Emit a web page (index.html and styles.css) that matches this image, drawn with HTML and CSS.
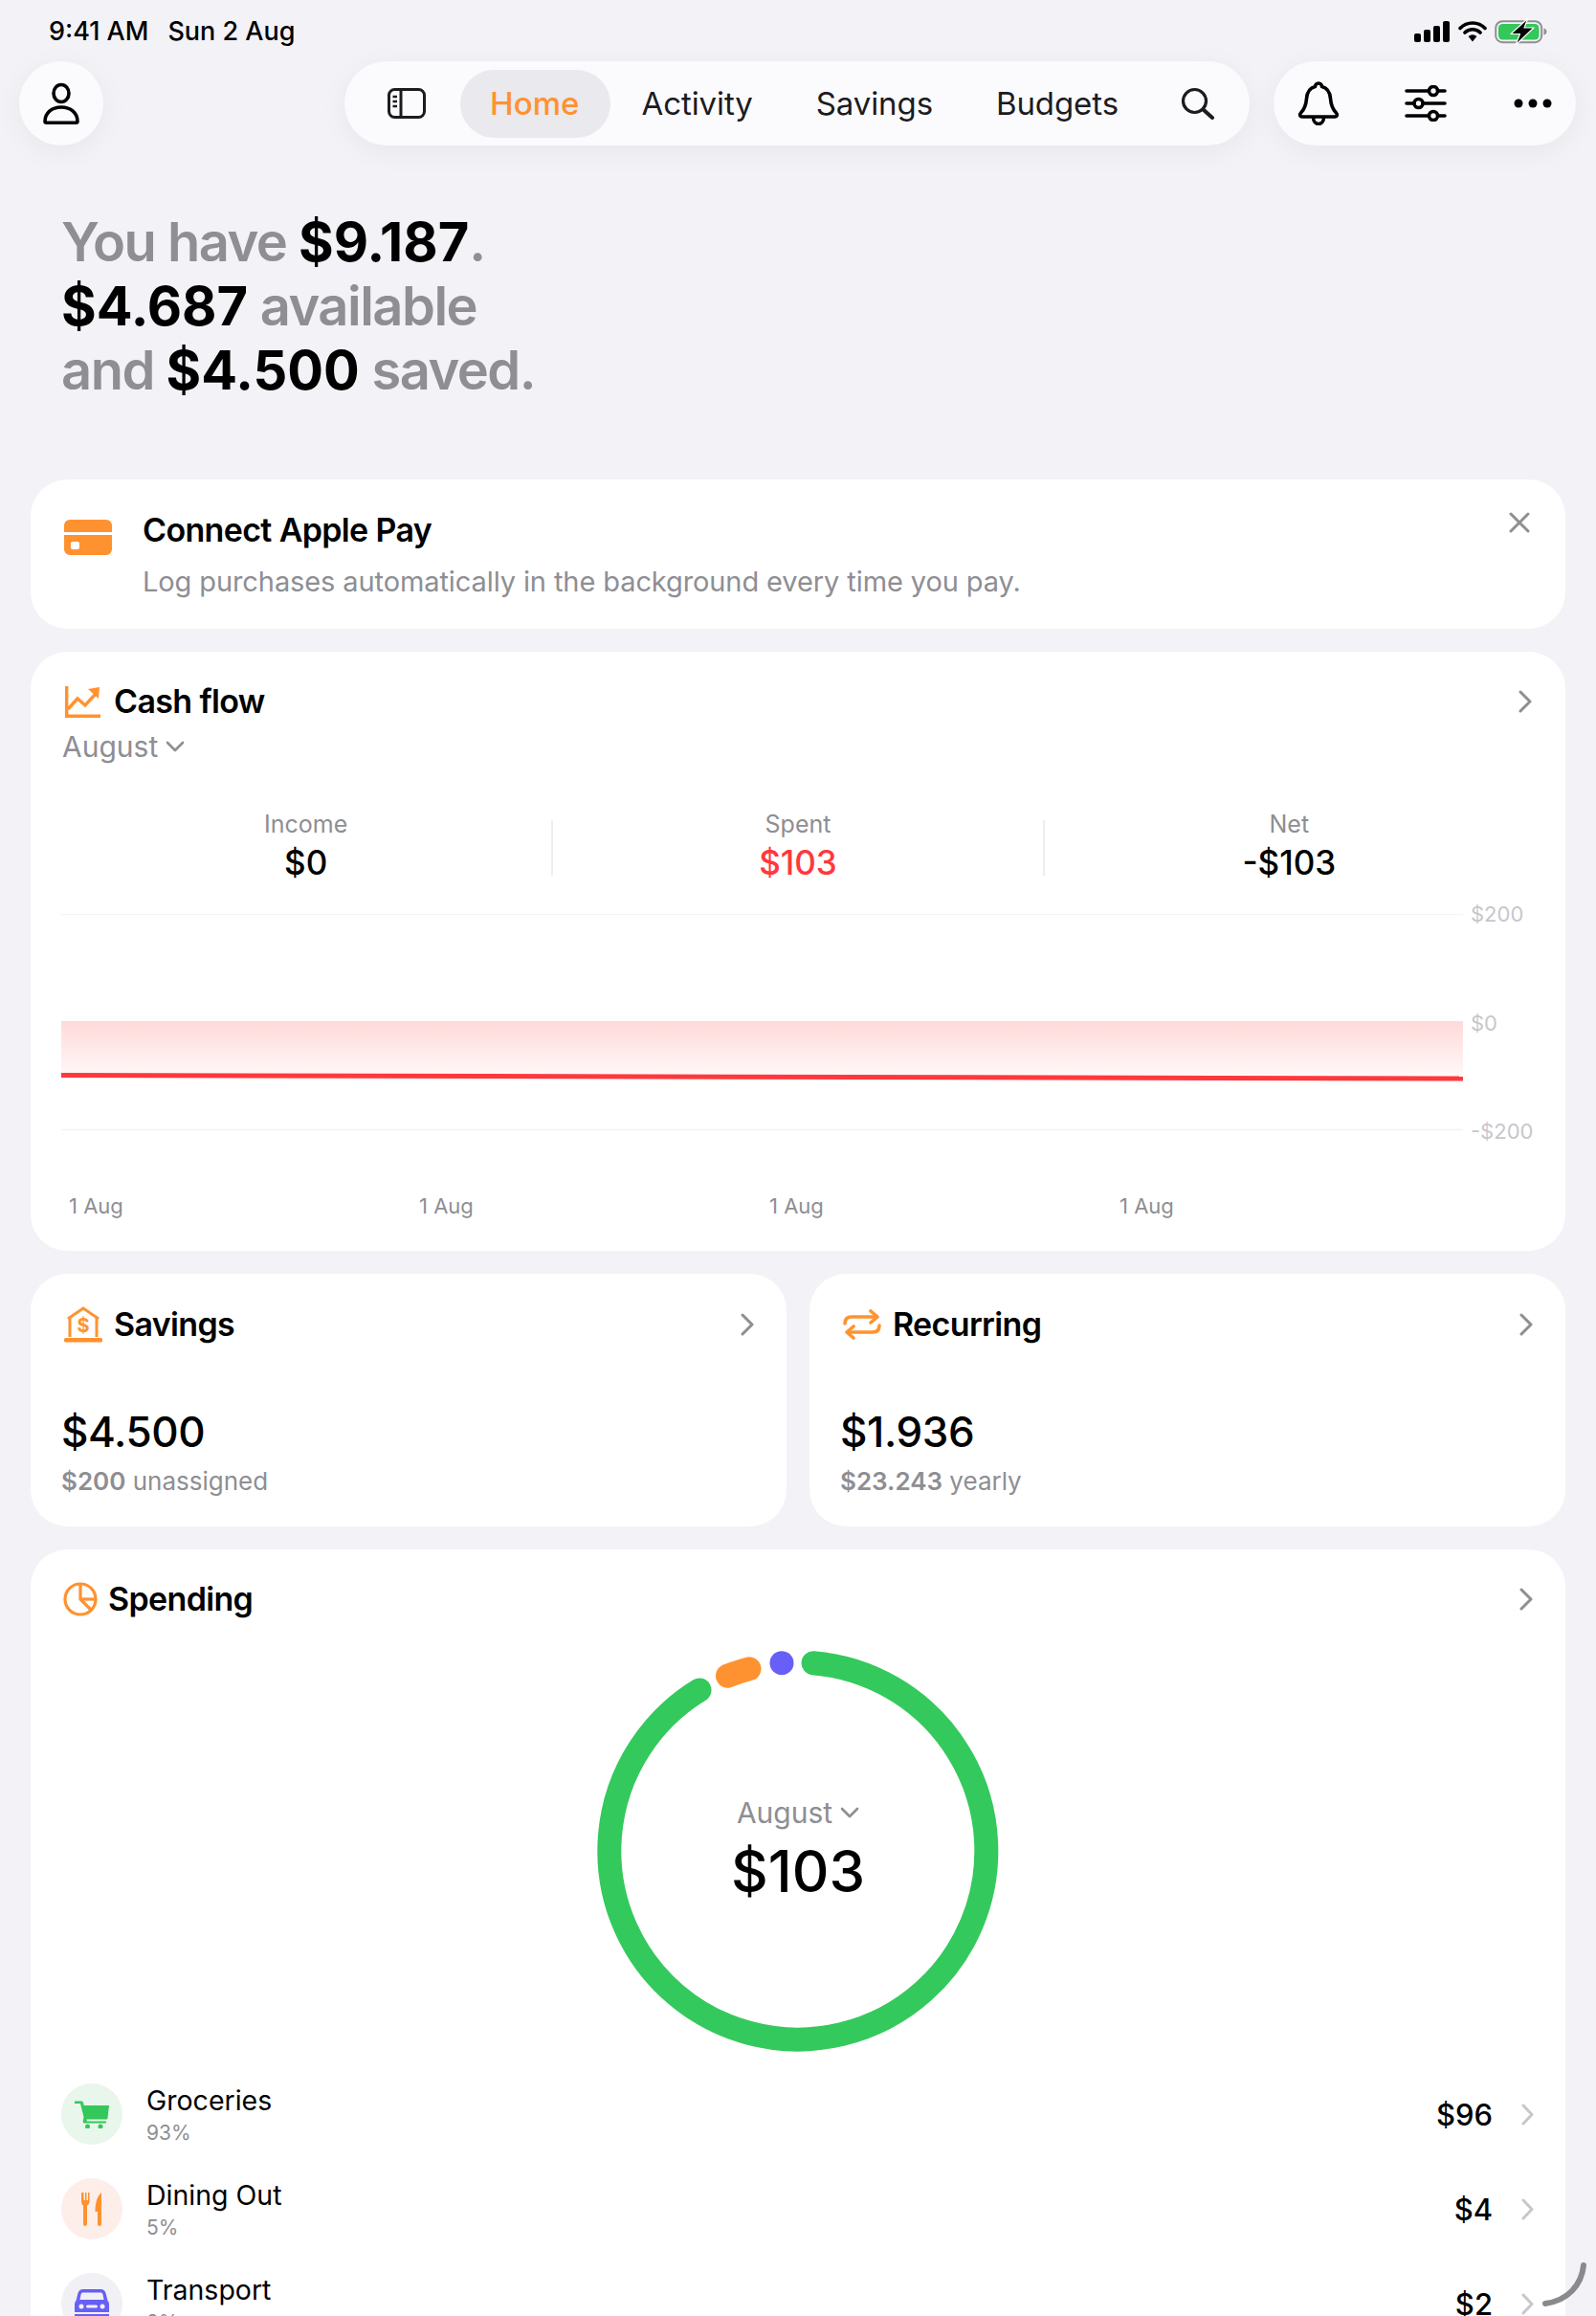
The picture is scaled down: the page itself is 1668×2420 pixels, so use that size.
FILE: index.html
```html
<!DOCTYPE html>
<html lang="en">
<head>
  <meta charset="UTF-8" />
  <meta name="viewport" content="width=device-width, initial-scale=1.0" />
  <title>Home</title>
  <link rel="stylesheet" href="styles.css">
</head>
<body>
  <div class="status-bar">
    <div class="status-time"><span>9:41 AM</span><span>Sun 2 Aug</span></div>
    <div class="status-icons">
      <svg width="38" height="22" viewBox="0 0 38 22"><rect x="0" y="13" width="7" height="9" rx="2"/><rect x="10" y="9" width="7" height="13" rx="2"/><rect x="20" y="5" width="7" height="17" rx="2"/><rect x="30" y="0" width="7" height="22" rx="2"/></svg>
      <svg width="30" height="24" viewBox="0 0 30 24"><path d="M2 8.5a18 18 0 0 1 26 0M7 13a11.5 11.5 0 0 1 16 0" fill="none" stroke="#000" stroke-width="3.6" stroke-linecap="round"/><path d="M10.6 17a6.5 6.5 0 0 1 8.8 0L15 22.5z"/></svg>
      <svg width="56" height="28" viewBox="0 0 56 28"><rect x="1.200" y="3.200" width="48" height="22" rx="7" fill="none" stroke="#8e8e93" stroke-width="2"/><rect x="4" y="6" width="42.500" height="16.500" rx="4.500" fill="#34c759"/><path d="M51.500 10.500c2 .5 3 2 3 3.500s-1 3-3 3.500z" fill="#8e8e93"/><path d="M35 0 17 16.500h9.500L22 28l19-18H31z" stroke="#fff" stroke-width="1.200" stroke-linejoin="round"/></svg>
    </div>
  </div>

  <header class="top-row">
    <button class="avatar-btn">
      <svg width="38" height="44" viewBox="0 0 38 44" fill="none" stroke="#000" stroke-width="3.600"><ellipse cx="19" cy="11.500" rx="8" ry="9"/><path d="M2 41c0-9 7-15 17-15s17 6 17 15c0 .8-.5 1.200-1.500 1.200h-31C2.500 42.200 2 41.800 2 41z"/></svg>
    </button>
    <nav class="main-nav">
      <svg class="sidebar-icon" width="40" height="32" viewBox="0 0 40 32" fill="none" stroke="#1c1c1e" stroke-width="3"><rect x="1.500" y="1.500" width="37" height="29" rx="6"/><path d="M14 2v28"/><path d="M5.500 9h4.500M5.500 14h4.500M5.500 19h4.500" stroke-width="2.400"/></svg>
      <a class="nav-item active">Home</a>
      <a class="nav-item">Activity</a>
      <a class="nav-item">Savings</a>
      <a class="nav-item">Budgets</a>
      <svg class="search-icon" width="35" height="34" viewBox="0 0 35 34" fill="none" stroke="#1c1c1e" stroke-width="3.200" stroke-linecap="round"><circle cx="14.500" cy="14.500" r="12"/><path d="M23.500 23.500 33 32" stroke-width="4"/></svg>
    </nav>
    <div class="action-pill">
      <svg width="44" height="46" viewBox="0 0 44 46" fill="none" stroke="#000" stroke-width="3.600" stroke-linejoin="round"><path d="M22 2c-2 0-3.500 1.500-3.500 3.500C12.500 7 10 11.500 9.500 18c-.5 7-2 11-6 15-1.500 1.500-1 4 1.500 4h34c2.500 0 3-2.500 1.500-4-4-4-5.500-8-6-15-.5-6.500-3-11-9-12.500C25.500 3.500 24 2 22 2z"/><path d="M16.500 37.500c0 4.500 2.500 7 5.500 7s5.500-2.500 5.500-7"/></svg>
      <svg class="sliders-icon" width="44" height="38" viewBox="0 0 44 38" fill="none" stroke="#000" stroke-width="3.600" stroke-linecap="round"><path d="M2 6h23M35 6h7M2 19h8M19 19h23M2 32h23M35 32h7"/><circle cx="30" cy="6" r="4.500"/><circle cx="14.500" cy="19" r="4.500"/><circle cx="30" cy="32" r="4.500"/></svg>
      <svg width="40" height="10" viewBox="0 0 40 10"><circle cx="5" cy="5" r="4.500"/><circle cx="20" cy="5" r="4.500"/><circle cx="35" cy="5" r="4.500"/></svg>
    </div>
  </header>

  <h1 class="balance">
    You have <b>$9.187</b>.<br>
    <b>$4.687</b> available<br>
    and <b>$4.500</b> saved.
  </h1>

  <main class="cards">
    <section class="card promo">
      <svg class="promo-icon" width="50" height="37" viewBox="0 0 50 37"><path d="M6 0h38a6 6 0 0 1 6 6v7H0V6a6 6 0 0 1 6-6zM0 16h50v15a6 6 0 0 1-6 6H6a6 6 0 0 1-6-6z" fill="#ff9230"/><rect x="7" y="23" width="9" height="8" rx="2" fill="#fff"/></svg>
      <div class="promo-text">
        <div class="promo-title">Connect Apple Pay</div>
        <div class="promo-desc">Log purchases automatically in the background every time you pay.</div>
      </div>
      <svg class="close-icon" width="22" height="22" viewBox="0 0 22 22" fill="none" stroke="#8e8e93" stroke-width="3" stroke-linecap="round"><path d="M2 2l18 18M20 2 2 20"/></svg>
    </section>

    <section class="card cashflow">
      <div class="card-head">
        <svg width="37" height="33" viewBox="0 0 37 33" fill="none" stroke="#ff9230" stroke-width="3.400"><path d="M1.700 0v31.300H37"/><path d="M3 24l10-11 8 7 11-12"/><path d="M24 3l12-2-1 12z" fill="#ff9230" stroke="none"/></svg>
        <h2>Cash flow</h2>
        <svg class="chevron" width="14" height="24" viewBox="0 0 14 24" fill="none" stroke="#8e8e93" stroke-width="3" stroke-linecap="round" stroke-linejoin="round"><path d="M2 2l10 10L2 22"/></svg>
      </div>
      <div class="month-picker">August <svg width="20" height="12" viewBox="0 0 20 12" fill="none" stroke="#8e8e93" stroke-width="2.600" stroke-linecap="round" stroke-linejoin="round"><path d="M2 2l8 8 8-8"/></svg></div>
      <div class="stats">
        <div class="stat"><div class="stat-label">Income</div><div class="stat-value">$0</div></div>
        <div class="stat"><div class="stat-label">Spent</div><div class="stat-value red">$103</div></div>
        <div class="stat"><div class="stat-label">Net</div><div class="stat-value">-$103</div></div>
      </div>
      <div class="chart-row">
        <svg class="chart" width="1465" height="230" viewBox="0 0 1465 230">
          <defs>
            <linearGradient id="area" x1="0" y1="0" x2="0" y2="1">
              <stop offset="0" stop-color="#ffd9d9"/>
              <stop offset="1" stop-color="#fff8f8"/>
            </linearGradient>
          </defs>
          <path d="M0 .5H1465" stroke="#f6f3f4" stroke-width="1.500"/>
          <path d="M0 225.500H1465" stroke="#f2f2f5" stroke-width="1.500"/>
          <rect x="0" y="112" width="1465" height="57" fill="url(#area)"/>
          <path d="M0 168.500 1465 172" stroke="#ff383c" stroke-width="5"/>
        </svg>
        <div class="y-axis"><span>$200</span><span>$0</span><span>-$200</span></div>
      </div>
      <div class="x-axis"><span>1 Aug</span><span>1 Aug</span><span>1 Aug</span><span>1 Aug</span></div>
    </section>

    <div class="half-row">
      <section class="card mini">
        <div class="card-head">
          <svg width="40" height="38" viewBox="0 0 40 38" fill="none" stroke="#ff9230" stroke-width="3"><path d="M4 13 20 2l16 11"/><path d="M6 12v20M34 12v20"/><rect x="0" y="33" width="40" height="4.500" rx="1.500" fill="#ff9230" stroke="none"/><text x="20" y="27" class="dollar-glyph">$</text></svg>
          <h2>Savings</h2>
          <svg class="chevron" width="14" height="24" viewBox="0 0 14 24" fill="none" stroke="#8e8e93" stroke-width="3" stroke-linecap="round" stroke-linejoin="round"><path d="M2 2l10 10L2 22"/></svg>
        </div>
        <div class="mini-value">$4.500</div>
        <div class="mini-sub"><b>$200</b> unassigned</div>
      </section>
      <section class="card mini">
        <div class="card-head">
          <svg width="40" height="32" viewBox="0 0 40 32" fill="none" stroke="#ff9230" stroke-width="3.600" stroke-linecap="round" stroke-linejoin="round"><path d="M2 15c0-5 3-7 7-7h26"/><path d="M29 2l7 6-7 6"/><path d="M38 17c0 5-3 7-7 7H5"/><path d="M11 18l-7 6 7 6"/></svg>
          <h2>Recurring</h2>
          <svg class="chevron" width="14" height="24" viewBox="0 0 14 24" fill="none" stroke="#8e8e93" stroke-width="3" stroke-linecap="round" stroke-linejoin="round"><path d="M2 2l10 10L2 22"/></svg>
        </div>
        <div class="mini-value">$1.936</div>
        <div class="mini-sub"><b>$23.243</b> yearly</div>
      </section>
    </div>

    <section class="card spending">
      <div class="card-head">
        <svg width="36" height="36" viewBox="0 0 36 36" fill="none" stroke="#ff9230" stroke-width="3.200" stroke-linejoin="round"><circle cx="18" cy="18" r="16"/><path d="M18 2v16l11 11"/><path d="M18 18h16"/></svg>
        <h2>Spending</h2>
        <svg class="chevron" width="14" height="24" viewBox="0 0 14 24" fill="none" stroke="#8e8e93" stroke-width="3" stroke-linecap="round" stroke-linejoin="round"><path d="M2 2l10 10L2 22"/></svg>
      </div>
      <div class="donut-wrap">
        <svg width="420" height="420" viewBox="0 0 420 420" fill="none" stroke-width="25" stroke-linecap="round">
          <path d="M226 13.700A197 197 0 1 1 107 42" stroke="#34c95c"/>
          <path d="M136.500 27.200A197 197 0 0 1 159 19.700" stroke="#ff9230"/>
          <circle cx="193" cy="13.700" r="12.500" fill="#675ff7" stroke="none"/>
        </svg>
        <div class="donut-center">
          <div class="month-picker">August <svg width="20" height="12" viewBox="0 0 20 12" fill="none" stroke="#8e8e93" stroke-width="2.600" stroke-linecap="round" stroke-linejoin="round"><path d="M2 2l8 8 8-8"/></svg></div>
          <div class="donut-total">$103</div>
        </div>
      </div>
      <ul class="categories">
        <li class="category">
          <span class="cat-icon groceries">
            <svg width="36" height="30" viewBox="0 0 36 30"><path d="M0 1.500h7c1 0 1.700.5 2 1.500l.6 3H36l-1.500 13c-.1 1-.8 1.500-1.800 1.500H12.500L12.900 22.500H33v2H10c-1 0-1.500-.8-1.300-1.700L9.500 18 6 4H0z" fill="#34c759"/><circle cx="13.500" cy="28" r="2.500" fill="#34c759"/><circle cx="27" cy="28" r="2.500" fill="#34c759"/></svg>
          </span>
          <div class="cat-text"><div class="cat-name">Groceries</div><div class="cat-pct">93%</div></div>
          <div class="cat-amount">$96</div>
          <svg width="13" height="23" viewBox="0 0 13 23" fill="none" stroke="#c7c7cc" stroke-width="3" stroke-linecap="round" stroke-linejoin="round"><path d="M2 2l9 9.500L2 21"/></svg>
        </li>
        <li class="category">
          <span class="cat-icon dining">
            <svg width="22" height="35" viewBox="0 0 22 35" fill="#ff9230"><path d="M1 0h1.500v8H4V0h1.500v8H7V0h1.500v9c0 2.500-1 4-2.500 4.500V33a1.500 1.500 0 0 1-4 0V13.500C.800 13 0 11.500 0 9V0z"/><path d="M21 0v33a1.500 1.500 0 0 1-4 0V20h-2.500c0-8 1.500-16 6.500-20z"/></svg>
          </span>
          <div class="cat-text"><div class="cat-name">Dining Out</div><div class="cat-pct">5%</div></div>
          <div class="cat-amount">$4</div>
          <svg width="13" height="23" viewBox="0 0 13 23" fill="none" stroke="#c7c7cc" stroke-width="3" stroke-linecap="round" stroke-linejoin="round"><path d="M2 2l9 9.500L2 21"/></svg>
        </li>
        <li class="category">
          <span class="cat-icon transport">
            <svg class="car-icon" width="36" height="36" viewBox="0 0 36 36" fill="#675ff7"><path d="M9 0h18c3 0 4.500 1.500 5.500 4l2 8c1 1 1.500 2.500 1.500 4v18a2 2 0 0 1-2 2H2a2 2 0 0 1-2-2V16c0-1.500.5-3 1.500-4l2-8C4.500 1.500 6 0 9 0zM9 3.500c-1.200 0-2 .6-2.400 1.800L5.400 11h25.200l-1.200-5.700C29 4.100 28.200 3.500 27 3.500z"/><circle cx="7" cy="18" r="2.500" fill="#f0f0f5"/><circle cx="29" cy="18" r="2.500" fill="#f0f0f5"/><rect x="12" y="16.500" width="12" height="3" rx="1.500" fill="#f0f0f5"/><rect x="0" y="24" width="36" height="2" fill="#f0f0f5"/></svg>
          </span>
          <div class="cat-text"><div class="cat-name">Transport</div><div class="cat-pct">2%</div></div>
          <div class="cat-amount">$2</div>
          <svg width="13" height="23" viewBox="0 0 13 23" fill="none" stroke="#c7c7cc" stroke-width="3" stroke-linecap="round" stroke-linejoin="round"><path d="M2 2l9 9.500L2 21"/></svg>
        </li>
      </ul>
    </section>
  </main>

  <svg class="corner-grip" width="46" height="46" viewBox="0 0 46 46" fill="none"><path d="M43 3C41 24 26 40 3 43" stroke="#8a8a8e" stroke-width="6" stroke-linecap="round"/></svg>
</body>
</html>
```

FILE: styles.css
```css
* {
  box-sizing: border-box;
}
html, body {
  height: 2420px;
  overflow: hidden;
}
body {
  margin: 0;
  position: relative;
  background: #f2f2f7;
  font-family: Inter, "Liberation Sans", sans-serif;
  color: #000;
}
h1, h2, ul {
  margin: 0;
  padding: 0;
}
svg {
  display: block;
  flex: none;
}

/* status bar */
.status-bar {
  height: 64px;
  padding: 18px 50px 0 51px;
  display: flex;
  justify-content: space-between;
}
.status-time {
  display: flex;
  gap: 20px;
  font-size: 27px;
  line-height: 30px;
  font-weight: 500;
}
.status-icons {
  display: flex;
  align-items: center;
  gap: 8px;
  height: 30px;
}

/* top navigation */
.top-row {
  display: flex;
  align-items: center;
  height: 88px;
  padding: 0 21px 0 20px;
}
.avatar-btn {
  width: 88px;
  height: 88px;
  border: none;
  border-radius: 50%;
  background: #fbfbfe;
  box-shadow: 0 6px 30px rgba(0,0,0,0.05);
  display: flex;
  align-items: center;
  justify-content: center;
  padding: 0;
}
.main-nav {
  margin-left: 252px;
  width: 946px;
  height: 88px;
  border-radius: 44px;
  background: #fbfbfe;
  box-shadow: 0 6px 30px rgba(0,0,0,0.05);
  display: flex;
  align-items: center;
  padding-left: 45px;
}
.sidebar-icon {
  margin-right: 36px;
}
.nav-item {
  font-size: 33px;
  line-height: 71px;
  font-weight: 400;
  letter-spacing: -0.1px;
  color: #1c1c1e;
  padding: 0 33px;
  border-radius: 36px;
}
.nav-item.active {
  color: #ff9230;
  background: #e9e9ee;
  font-weight: 500;
  letter-spacing: 0.1px;
  padding: 0 32px 0 31px;
}
.search-icon {
  margin-left: 32px;
}
.action-pill {
  margin-left: 25px;
  width: 316px;
  height: 88px;
  border-radius: 44px;
  background: #fbfbfe;
  box-shadow: 0 6px 30px rgba(0,0,0,0.05);
  display: flex;
  align-items: center;
  justify-content: space-between;
  padding: 0 25px 0 25px;
}
.sliders-icon {
  margin-left: -2px;
}

/* headline */
.balance {
  margin: 68px 0 80px 64px;
  font-size: 56px;
  line-height: 67px;
  font-weight: 600;
  letter-spacing: -1.5px;
  color: #8e8e93;
}
.balance b {
  font-weight: 700;
  letter-spacing: 0;
  color: #000;
}

/* cards */
.cards {
  margin: 0 32px;
  display: flex;
  flex-direction: column;
  gap: 24px;
}
.card {
  background: #fff;
  border-radius: 38px;
}
.card-head {
  display: flex;
  align-items: center;
  height: 40px;
}
.card-head h2 {
  font-size: 34px;
  line-height: 40px;
  font-weight: 600;
  letter-spacing: -0.65px;
}
.chevron {
  margin: 0 3px 0 auto;
}

.promo {
  height: 156px;
  padding: 33px 37px 0 34px;
  display: flex;
}
.promo-icon {
  margin: 9px 32px 0 1px;
}
.promo-title {
  font-size: 34px;
  line-height: 40px;
  font-weight: 600;
  letter-spacing: -0.65px;
}
.promo-desc {
  margin-top: 14px;
  font-size: 29px;
  line-height: 40px;
  letter-spacing: -0.1px;
  color: #8e8e93;
}
.close-icon {
  margin: 1px 0 0 auto;
}

.cashflow {
  height: 626px;
  padding: 32px 32px 0;
}
.cashflow .card-head svg:first-child {
  margin: 0 14px 0 4px;
}
.month-picker {
  display: flex;
  align-items: center;
  gap: 8px;
  font-size: 30px;
  line-height: 38px;
  color: #8e8e93;
}
.cashflow .month-picker {
  margin: 8px 0 0 1px;
}
.stats {
  margin-top: 58px;
  display: grid;
  grid-template-columns: repeat(3, 1fr);
  width: 1540px;
  margin-left: -1px;
}
.stat {
  text-align: center;
  height: 58px;
  border-left: 2px solid #eeeef1;
}
.stat:first-child {
  border-left: none;
}
.stat-label {
  margin-top: -11px;
  font-size: 25px;
  line-height: 30px;
  color: #8e8e93;
}
.stat-value {
  margin-top: 5px;
  font-size: 35px;
  line-height: 40px;
  font-weight: 500;
}
.stat-value.red {
  color: #ff383c;
}
.chart-row {
  margin-top: 40px;
  display: flex;
  align-items: flex-start;
}
.y-axis {
  margin: -14px 0 0 8px;
  height: 255px;
  display: flex;
  flex-direction: column;
  justify-content: space-between;
  font-size: 22px;
  line-height: 28px;
  color: #c7c7cc;
}
.x-axis {
  margin-top: 50px;
  padding-left: 8px;
  display: grid;
  grid-template-columns: repeat(4, 366px);
  font-size: 22px;
  line-height: 28px;
  color: #8e8e93;
}

.half-row {
  display: grid;
  grid-template-columns: 790px 790px;
  gap: 24px;
}
.mini {
  height: 264px;
  padding: 33px 32px 0 32px;
}
.mini .card-head svg:first-child {
  margin: 0 12px 0 3px;
}
.mini .chevron {
  margin-right: 2px;
}
.mini-value {
  margin-top: 64px;
  font-size: 44px;
  line-height: 56px;
  font-weight: 500;
  letter-spacing: -0.4px;
}
.mini-sub {
  margin-top: 7px;
  font-size: 26px;
  line-height: 34px;
  color: #8e8e93;
}
.mini-sub b {
  font-weight: 600;
}
.dollar-glyph {
  font-family: Inter, sans-serif;
  font-size: 20px;
  font-weight: 700;
  fill: #ff9230;
  stroke: none;
  text-anchor: middle;
}

.spending {
  height: 900px;
  padding: 32px 32px 0 34px;
}
.spending .card-head svg:first-child {
  margin-right: 11px;
}
.spending .chevron {
  margin-right: 2px;
}
.donut-wrap {
  position: relative;
  width: 420px;
  height: 420px;
  margin: 33px 0 0 558px;
}
.donut-center {
  position: absolute;
  left: 0;
  right: 0;
  top: 151px;
  display: flex;
  flex-direction: column;
  align-items: center;
}
.donut-total {
  margin-top: 4px;
  font-size: 60px;
  line-height: 76px;
  font-weight: 500;
}
.categories {
  list-style: none;
  margin: 33px 0 0 -2px;
  display: flex;
  flex-direction: column;
  gap: 35px;
}
.category {
  height: 64px;
  display: flex;
  align-items: center;
  padding-right: 1px;
}
.cat-icon {
  width: 64px;
  height: 64px;
  border-radius: 50%;
  display: flex;
  align-items: center;
  justify-content: center;
  margin-right: 25px;
}
.cat-icon.groceries { background: #e8f6ec; }
.cat-icon.dining { background: #fdeeea; }
.cat-icon.transport { background: #f0f0f5; }
.car-icon {
  margin-top: 6px;
}
.cat-text {
  flex: 1;
}
.cat-name {
  font-size: 28.500px;
  line-height: 36px;
}
.cat-pct {
  margin-top: 3px;
  font-size: 21px;
  line-height: 26px;
  color: #8e8e93;
}
.cat-amount {
  font-size: 31px;
  font-weight: 500;
  margin-right: 30px;
}
.corner-grip {
  position: absolute;
  right: 10px;
  bottom: 10px;
}
```
